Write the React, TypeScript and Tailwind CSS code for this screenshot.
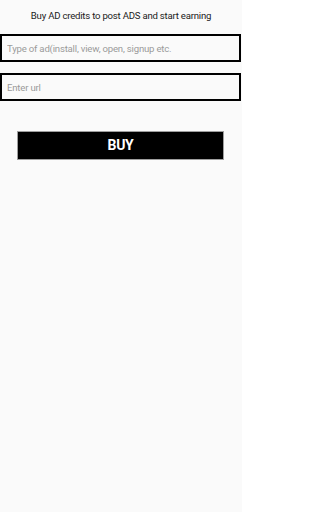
export default function App() {
  return (
    <div className="flex h-[512px] w-[242px] flex-col bg-[#fafafa] font-['Roboto',sans-serif]">
      <div className="flex h-[33px] items-center justify-center text-[9.6px] tracking-[-0.22px] text-[#1a1a1a]">
        Buy AD credits to post ADS and start earning
      </div>
      <div className="mt-[1px] flex flex-col gap-[11px] pr-[1px]">
        <input
          className="h-[28px] w-full border-2 border-black bg-[#fafafa] px-[5px] pt-[1px] text-[9.6px] tracking-[-0.2px] text-[#1a1a1a] outline-none placeholder:text-[#9a9a9a]"
          placeholder="Type of ad(install, view, open, signup etc."
        />
        <input
          className="h-[28px] w-full border-2 border-black bg-[#fafafa] px-[5px] pt-[1px] text-[9.6px] tracking-[-0.2px] text-[#1a1a1a] outline-none placeholder:text-[#9a9a9a]"
          placeholder="Enter url"
        />
      </div>
      <div className="mt-[30px] flex justify-center pr-[1px]">
        <button className="h-[29px] w-[207px] border border-[#9e9e9e] bg-black text-[14px] font-bold tracking-[-0.3px] text-white">
          BUY
        </button>
      </div>
    </div>
  )
}
